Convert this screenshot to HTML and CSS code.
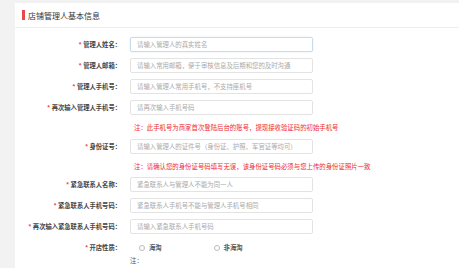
FILE: index.html
```html
<!DOCTYPE html>
<html lang="zh-CN">
<head>
  <meta charset="UTF-8">
  <title>店铺管理人基本信息</title>
  <link rel="stylesheet" href="styles.css">
</head>
<body>
  <div class="panel">
    <div class="panel-title"><span class="title-bar"></span>店铺管理人基本信息</div>
    <form class="form">
      <div class="row">
        <label class="label"><em>*</em> 管理人姓名：</label>
        <input class="field focus" type="text" placeholder="请输入管理人的真实姓名">
      </div>
      <div class="row">
        <label class="label"><em>*</em> 管理人邮箱：</label>
        <input class="field" type="text" placeholder="请输入常用邮箱，便于审核信息及后期和您的及时沟通">
      </div>
      <div class="row">
        <label class="label"><em>*</em> 管理人手机号：</label>
        <input class="field" type="text" placeholder="请输入管理人常用手机号，不支持座机号">
      </div>
      <div class="row">
        <label class="label"><em>*</em> 再次输入管理人手机号：</label>
        <input class="field" type="text" placeholder="请再次输入手机号码">
      </div>
      <div class="note">注：此手机号为商家首次登陆后台的账号，提现接收验证码的初始手机号</div>
      <div class="row">
        <label class="label"><em>*</em> 身份证号：</label>
        <input class="field" type="text" placeholder="请输入管理人的证件号（身份证、护照、军官证等均可）">
      </div>
      <div class="note short">注：请确认您的身份证号码填写无误，该身份证号码必须与您上传的身份证照片一致</div>
      <div class="row">
        <label class="label"><em>*</em> 紧急联系人名称：</label>
        <input class="field" type="text" placeholder="紧急联系人与管理人不能为同一人">
      </div>
      <div class="row">
        <label class="label"><em>*</em> 紧急联系人手机号码：</label>
        <input class="field" type="text" placeholder="紧急联系人手机号不能与管理人手机号相同">
      </div>
      <div class="row">
        <label class="label"><em>*</em> 再次输入紧急联系人手机号码：</label>
        <input class="field" type="text" placeholder="请输入紧急联系人手机号码">
      </div>
      <div class="row">
        <label class="label"><em>*</em> 开店性质：</label>
        <div class="radios">
          <span class="radio"><i></i>海淘</span>
          <span class="radio"><i></i>非海淘</span>
        </div>
      </div>
      <div class="tip">注：</div>
    </form>
  </div>
</body>
</html>
```

FILE: styles.css
```css
body {
  margin: 0;
  background-color: #f2f2f2;
  font-family: "Noto Sans CJK SC", "Liberation Sans", sans-serif;
}
.panel {
  margin: 3px 0 0 15px;
  height: 265px;
  background: white;
  overflow: hidden;
}
.panel-title {
  display: flex;
  align-items: center;
  height: 24px;
  padding-left: 7px;
  border-bottom: 1px solid #eeeeee;
  font-size: 8px;
  color: #333;
}
.title-bar {
  width: 3px;
  height: 10px;
  margin-right: 3px;
  background-color: #e8474b;
}
.form {
  padding-top: 6px;
}
.row {
  display: flex;
  align-items: center;
  height: 21px;
}
.label {
  width: 106px;
  padding-right: 9px;
  text-align: right;
  font-size: 6.3px;
  font-weight: bold;
  color: #444;
  white-space: nowrap;
}
.label em {
  font-style: normal;
  color: #e8474b;
}
.field {
  box-sizing: border-box;
  width: 183px;
  height: 15px;
  padding: 0 6px;
  border: 1px solid #e3e3e3;
  border-radius: 2px;
  font-family: inherit;
  font-size: 6.4px;
  outline: none;
}
.field.focus {
  border-color: #c9dcec;
  box-shadow: 0 0 2px #dbe8f3;
}
.field::placeholder {
  color: #aaa;
}
.note {
  height: 18px;
  line-height: 20px;
  padding-left: 119px;
  font-size: 6.4px;
  color: #f0282d;
  white-space: nowrap;
}
.note.short {
  height: 17px;
  line-height: 19px;
}
.radios {
  display: flex;
  gap: 52px;
  padding-left: 9px;
}
.radio {
  display: flex;
  align-items: center;
  gap: 4px;
  font-size: 6.3px;
  font-weight: bold;
  color: #555;
}
.radio i {
  width: 4px;
  height: 4px;
  border: 1px solid #bbb;
  border-radius: 50%;
}
.tip {
  height: 8px;
  line-height: 6px;
  padding-left: 115px;
  font-size: 6.4px;
  color: #555;
}
```
